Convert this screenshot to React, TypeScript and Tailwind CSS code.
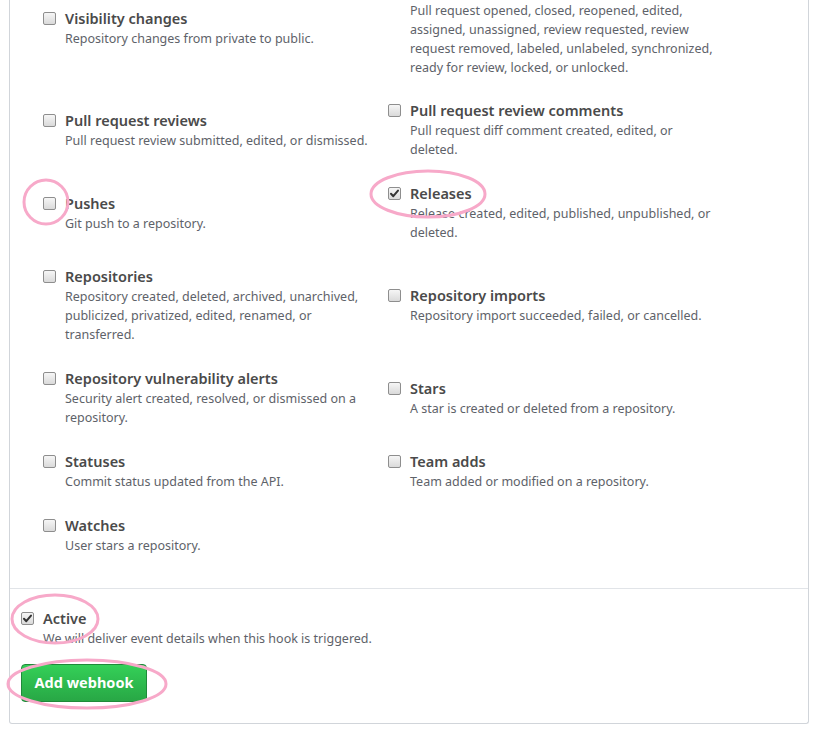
import React from 'react';

type EventItem = {
  title: string;
  lines: string[];
  checked?: boolean;
  mt: string;
};

const leftEvents: EventItem[] = [
  { title: 'Visibility changes', lines: ['Repository changes from private to public.'], mt: 'mt-[7px]' },
  { title: 'Pull request reviews', lines: ['Pull request review submitted, edited, or dismissed.'], mt: 'mt-[61px]' },
  { title: 'Pushes', lines: ['Git push to a repository.'], mt: 'mt-[42px]' },
  {
    title: 'Repositories',
    lines: ['Repository created, deleted, archived, unarchived,', 'publicized, privatized, edited, renamed, or', 'transferred.'],
    mt: 'mt-[32px]',
  },
  {
    title: 'Repository vulnerability alerts',
    lines: ['Security alert created, resolved, or dismissed on a', 'repository.'],
    mt: 'mt-[23px]',
  },
  { title: 'Statuses', lines: ['Commit status updated from the API.'], mt: 'mt-[23px]' },
  { title: 'Watches', lines: ['User stars a repository.'], mt: 'mt-[23px]' },
];

// the "Pull requests" choice is scrolled past its title; only its description shows
const pullRequestLines = [
  'Pull request opened, closed, reopened, edited,',
  'assigned, unassigned, review requested, review',
  'request removed, labeled, unlabeled, synchronized,',
  'ready for review, locked, or unlocked.',
];

const rightEvents: EventItem[] = [
  {
    title: 'Pull request review comments',
    lines: ['Pull request diff comment created, edited, or', 'deleted.'],
    mt: 'mt-[22px]',
  },
  {
    title: 'Releases',
    lines: ['Release created, edited, published, unpublished, or', 'deleted.'],
    checked: true,
    mt: 'mt-[23px]',
  },
  { title: 'Repository imports', lines: ['Repository import succeeded, failed, or cancelled.'], mt: 'mt-[42px]' },
  { title: 'Stars', lines: ['A star is created or deleted from a repository.'], mt: 'mt-[52px]' },
  { title: 'Team adds', lines: ['Team added or modified on a repository.'], mt: 'mt-[32px]' },
];

function Checkbox({ checked }: { checked?: boolean }) {
  return (
    <span className="relative block w-[13px] h-[13px] rounded-[2px] border border-[#8e8e8e] bg-gradient-to-b from-[#f6f6f6] to-[#dadada]">
      {checked && (
        <svg viewBox="0 0 13 13" className="absolute -left-px -top-px w-[13px] h-[13px]">
          <path d="M3 6.8 L5.3 9.2 L10 3.6" fill="none" stroke="#333" strokeWidth="2" strokeLinecap="round" strokeLinejoin="round" />
        </svg>
      )}
    </span>
  );
}

function Desc({ lines }: { lines: string[] }) {
  return (
    <div className="text-[12.5px] leading-[19px] text-[#5e6269]">
      {lines.map((l, i) => (
        <div key={i} className="whitespace-nowrap">{l}</div>
      ))}
    </div>
  );
}

function Choice({ item }: { item: EventItem }) {
  return (
    <div className={`flex gap-[9px] ${item.mt}`}>
      <div className="h-[22px] flex items-center shrink-0">
        <Checkbox checked={item.checked} />
      </div>
      <div>
        <div className="text-[14.5px] leading-[22px] font-semibold text-[#4a4a4a]">{item.title}</div>
        <Desc lines={item.lines} />
      </div>
    </div>
  );
}

export default function App() {
  return (
    <div
      className="relative bg-white min-h-screen overflow-hidden"
      style={{ fontFamily: '"Segoe UI", "Noto Sans", sans-serif' }}
    >
      <div className="ml-[9px] w-[800px] border-x border-b border-[#d1d5da] rounded-b-[3px]">
        <div className="flex pl-[33px] pb-[33px]">
          <div className="w-[345px] flex flex-col">
            {leftEvents.map(e => (
              <Choice key={e.title} item={e} />
            ))}
          </div>
          <div className="w-[345px] flex flex-col">
            <div className="pl-[22px] mt-px">
              <Desc lines={pullRequestLines} />
            </div>
            {rightEvents.map(e => (
              <Choice key={e.title} item={e} />
            ))}
          </div>
        </div>

        <div className="border-t border-[#e1e4e8] px-[11px] pt-[18px] pb-[21px]">
          <div className="flex gap-[9px]">
            <div className="h-[22px] flex items-center shrink-0">
              <Checkbox checked />
            </div>
            <div>
              <div className="text-[14.5px] leading-[22px] font-semibold text-[#4a4a4a]">Active</div>
              <Desc lines={['We will deliver event details when this hook is triggered.']} />
            </div>
          </div>
          <button className="mt-[16px] h-[38px] w-[126px] rounded-[4px] border border-[#1f8a3a] bg-gradient-to-b from-[#34d058] to-[#28a745] text-white text-[14.5px] font-bold">
            Add webhook
          </button>
        </div>
      </div>

      {/* annotation marks */}
      <svg className="absolute left-0 top-0 pointer-events-none" width="820" height="737">
        <g fill="none" stroke="#f7a9c9" strokeWidth="3">
          <ellipse cx="46" cy="202" rx="22" ry="22" />
          <ellipse cx="428" cy="194" rx="57" ry="23" />
          <ellipse cx="55" cy="619" rx="43" ry="24" />
          <ellipse cx="87" cy="684" rx="79" ry="24" />
        </g>
      </svg>
    </div>
  );
}
